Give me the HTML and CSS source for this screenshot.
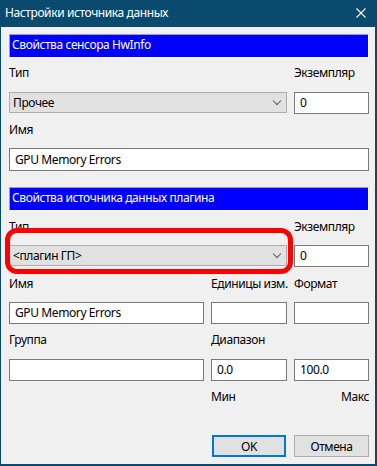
FILE: index.html
```html
<html>
<head>
    <title>Настройки источника данных</title>
    <link rel="stylesheet" href="styles.css">
</head>
<body>
    <div class="window">
        <div class="titlebar">
            <span class="title">Настройки источника данных</span>
            <svg class="close" width="10" height="10" viewBox="0 0 10 10">
                <path d="M0.5 0.5 L9.5 9.5 M9.5 0.5 L0.5 9.5" stroke="#fff" stroke-width="1.1" fill="none"/>
            </svg>
        </div>

        <div class="content">
            <div class="band band-first">Свойства сенсора HwInfo</div>

            <div class="row labels gap7">
                <span class="c1">Тип</span>
                <span class="c3">Экземпляр</span>
            </div>
            <div class="row fields gap11">
                <div class="combo span2">Прочее<span class="chevron"></span></div>
                <div class="edit c3">0</div>
            </div>
            <div class="row labels gap8">
                <span class="c1">Имя</span>
            </div>
            <div class="row fields gap10">
                <div class="edit tall span3">GPU Memory Errors</div>
            </div>

            <div class="band band-second">Свойства источника данных плагина</div>

            <div class="row labels gap8">
                <span class="c1">Тип</span>
                <span class="c3">Экземпляр</span>
            </div>
            <div class="row fields gap10">
                <div class="combo span2">&lt;плагин ГП&gt;<span class="chevron"></span></div>
                <div class="edit c3">0</div>
            </div>
            <div class="row labels gap9">
                <span class="c1">Имя</span>
                <span class="c2">Единицы изм.</span>
                <span class="c3">Формат</span>
            </div>
            <div class="row fields gap10">
                <div class="edit c1">GPU Memory Errors</div>
                <div class="edit c2"></div>
                <div class="edit c3"></div>
            </div>
            <div class="row labels gap8">
                <span class="c1">Группа</span>
                <span class="c2">Диапазон</span>
            </div>
            <div class="row fields gap11">
                <div class="edit c1"></div>
                <div class="edit c2">0.0</div>
                <div class="edit c3">100.0</div>
            </div>
            <div class="row labels gap8">
                <span class="c2">Мин</span>
                <span class="c3 right">Макс</span>
            </div>
            <div class="row buttons">
                <button class="btn btn-default c2">OK</button>
                <button class="btn c3">Отмена</button>
            </div>
        </div>

        <div class="highlight"></div>
    </div>
</body>
</html>
```

FILE: styles.css
```css
body {
    margin: 0;
    font-family: 'Noto Sans', 'Open Sans', sans-serif;
    font-size: 12px;
    letter-spacing: -0.4px;
    color: #000;
}
.window {
    position: relative;
    width: 377px;
    height: 466px;
    background: #0b4a6f;
    display: flex;
    flex-direction: column;
}
.titlebar {
    height: 27px;
    display: flex;
    align-items: center;
    justify-content: space-between;
    padding: 0 11px 0 5px;
    color: #fff;
}
.title { line-height: 16px; margin-top: -2px; }
.close { margin-top: -1px; }
.content {
    flex: 1;
    background: #f0f0f0;
    margin: 0 2px 2px 1px;
    padding: 0 6px 0 8px;
}
.band {
    height: 22px;
    line-height: 20px;
    background: #0000ff;
    color: #fff;
    padding-left: 2px;
    border-top: 1px solid #a0a0a0;
    border-left: 1px solid #a0a0a0;
    border-bottom: 1px solid #fff;
    border-right: 1px solid #fff;
}
.band-first { margin-top: 7px; }
.band-second { margin-top: 16px; }

.row {
    display: grid;
    grid-template-columns: 195px 76px 75px;
    column-gap: 7px;
    white-space: nowrap;
}
.labels { height: 16px; line-height: 16px; }
.gap7 { margin-top: 7px; }
.gap8 { margin-top: 8px; }
.gap9 { margin-top: 9px; }
.gap10 { margin-top: 10px; }
.gap11 { margin-top: 11px; }
.c1 { grid-column: 1; }
.c2 { grid-column: 2; }
.c3 { grid-column: 3; }
.span2 { grid-column: 1 / 3; }
.span3 { grid-column: 1 / 4; }
.right { text-align: right; }

.fields { align-items: start; }
.combo {
    position: relative;
    box-sizing: border-box;
    height: 21px;
    line-height: 19px;
    background: #e1e1e1;
    border: 1px solid #adadad;
    padding-left: 3px;
}
.chevron {
    position: absolute;
    right: 6px;
    top: 5px;
    width: 5px;
    height: 5px;
    border-right: 1px solid #606060;
    border-bottom: 1px solid #606060;
    transform: rotate(45deg);
}
.edit {
    box-sizing: border-box;
    height: 22px;
    line-height: 20px;
    background: #fff;
    border: 1px solid #7a7a7a;
    padding-left: 5px;
}
.edit.tall { height: 23px; line-height: 21px; }

.buttons { margin-top: 30px; }
.btn {
    box-sizing: border-box;
    height: 22px;
    font-family: inherit;
    font-size: 12px;
    letter-spacing: -0.4px;
    color: #000;
    background: #e1e1e1;
    border: 1px solid #adadad;
    padding: 0;
}
.btn-default { border: 2px solid #0078d7; margin-left: 1px; width: 74px; }

.highlight {
    position: absolute;
    left: 5px;
    top: 228px;
    width: 288px;
    height: 46px;
    box-sizing: border-box;
    border: 5px solid #ff0000;
    border-radius: 12px;
}
```
